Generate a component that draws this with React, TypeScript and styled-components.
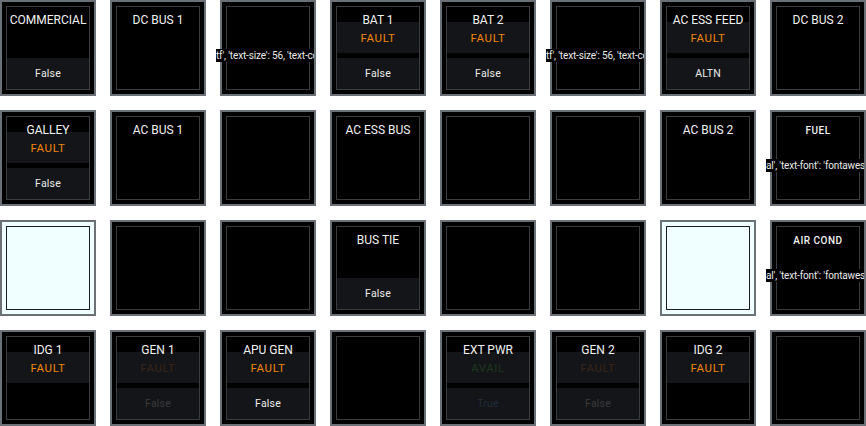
import React from "react";
import styled, { createGlobalStyle } from "styled-components";

const GlobalStyle = createGlobalStyle`
  html, body {
    margin: 0;
    padding: 0;
    background: #ffffff;
  }
  body {
    font-family: Roboto, "Liberation Sans", sans-serif;
  }
`;

type Tone = "fault" | "faultDim" | "availDim" | "normal" | "dim" | "trueDim";

type Line = { text: string; tone: Tone };

type Cell = {
  title?: string;
  small?: boolean;
  mid?: Line;
  bottom?: Line;
  overlay?: string;
  light?: boolean;
};

const toneColor: Record<Tone, string> = {
  fault: "#f0850c",
  faultDim: "#3a2519",
  availDim: "#1d381e",
  normal: "#ececec",
  dim: "#3a3b3d",
  trueDim: "#1e2d3c",
};

const SIZE_OVERLAY = "tf', 'text-size': 56, 'text-color': 'white'";
const FONT_OVERLAY = "al', 'text-font': 'fontawesome.ttf'";

const cells: Cell[] = [
  // row 1
  { title: "COMMERCIAL", bottom: { text: "False", tone: "normal" } },
  { title: "DC BUS 1" },
  { overlay: SIZE_OVERLAY },
  {
    title: "BAT 1",
    mid: { text: "FAULT", tone: "fault" },
    bottom: { text: "False", tone: "normal" },
  },
  {
    title: "BAT 2",
    mid: { text: "FAULT", tone: "fault" },
    bottom: { text: "False", tone: "normal" },
  },
  { overlay: SIZE_OVERLAY },
  {
    title: "AC ESS FEED",
    mid: { text: "FAULT", tone: "fault" },
    bottom: { text: "ALTN", tone: "normal" },
  },
  { title: "DC BUS 2" },
  // row 2
  {
    title: "GALLEY",
    mid: { text: "FAULT", tone: "fault" },
    bottom: { text: "False", tone: "normal" },
  },
  { title: "AC BUS 1" },
  {},
  { title: "AC ESS BUS" },
  {},
  {},
  { title: "AC BUS 2" },
  { title: "FUEL", small: true, overlay: FONT_OVERLAY },
  // row 3
  { light: true },
  {},
  {},
  { title: "BUS TIE", bottom: { text: "False", tone: "normal" } },
  {},
  {},
  { light: true },
  { title: "AIR COND", small: true, overlay: FONT_OVERLAY },
  // row 4
  { title: "IDG 1", mid: { text: "FAULT", tone: "fault" } },
  {
    title: "GEN 1",
    mid: { text: "FAULT", tone: "faultDim" },
    bottom: { text: "False", tone: "dim" },
  },
  {
    title: "APU GEN",
    mid: { text: "FAULT", tone: "fault" },
    bottom: { text: "False", tone: "normal" },
  },
  {},
  {
    title: "EXT PWR",
    mid: { text: "AVAIL", tone: "availDim" },
    bottom: { text: "True", tone: "trueDim" },
  },
  {
    title: "GEN 2",
    mid: { text: "FAULT", tone: "faultDim" },
    bottom: { text: "False", tone: "dim" },
  },
  { title: "IDG 2", mid: { text: "FAULT", tone: "fault" } },
  {},
];

const App = () => {
  return (
    <>
      <GlobalStyle />
      <Panel>
        {cells.map((cell, i) => (
          <Button key={i} $light={cell.light}>
            <Inner $light={cell.light}>
              {cell.title && <Title $small={cell.small}>{cell.title}</Title>}
              {cell.mid && (
                <MidBand>
                  <Value $tone={cell.mid.tone} $wide>
                    {cell.mid.text}
                  </Value>
                </MidBand>
              )}
              {cell.bottom && (
                <BottomBand>
                  <Value $tone={cell.bottom.tone}>{cell.bottom.text}</Value>
                </BottomBand>
              )}
            </Inner>
            {cell.overlay && <Overlay>{cell.overlay}</Overlay>}
          </Button>
        ))}
      </Panel>
    </>
  );
};

const Panel = styled.div`
  display: grid;
  grid-template-columns: repeat(8, 96px);
  grid-auto-rows: 96px;
  gap: 14px;
  width: 866px;
`;

const Button = styled.div<{ $light?: boolean }>`
  position: relative;
  box-sizing: border-box;
  width: 96px;
  height: 96px;
  border: 2px solid #6b7176;
  padding: 4px;
  background-color: ${(p) => (p.$light ? "#f0ffff" : "#000000")};
`;

const Inner = styled.div<{ $light?: boolean }>`
  box-sizing: border-box;
  height: 100%;
  border: 1px solid ${(p) => (p.$light ? "#1b1e20" : "#3a3d40")};
  display: grid;
  grid-template-columns: 1fr;
  grid-template-rows: 15px 31px 5px 31px;
`;

const Title = styled.div<{ $small?: boolean }>`
  grid-row: 1 / 3;
  grid-column: 1;
  z-index: 1;
  align-self: start;
  padding-top: ${(p) => (p.$small ? "7px" : "6px")};
  text-align: center;
  white-space: nowrap;
  line-height: 14px;
  font-size: ${(p) => (p.$small ? "10px" : "12px")};
  font-weight: ${(p) => (p.$small ? 500 : 400)};
  letter-spacing: ${(p) => (p.$small ? "0.5px" : "0")};
  color: #f2f2f2;
`;

const Band = styled.div`
  grid-column: 1;
  display: flex;
  align-items: center;
  justify-content: center;
  background-color: #141518;
`;

const MidBand = styled(Band)`
  grid-row: 2;
`;

const BottomBand = styled(Band)`
  grid-row: 4;
`;

const Value = styled.span<{ $tone: Tone; $wide?: boolean }>`
  font-size: ${(p) => (p.$wide ? "11.5px" : "10.5px")};
  letter-spacing: ${(p) => (p.$wide ? "0.6px" : "0.2px")};
  line-height: 14px;
  color: ${(p) => toneColor[p.$tone]};
`;

const Overlay = styled.div`
  position: absolute;
  top: 47px;
  left: -6px;
  width: 98px;
  overflow: hidden;
  white-space: nowrap;
  background-color: #000000;
  font-size: 10px;
  letter-spacing: -0.15px;
  line-height: 13px;
  color: #eaeaea;
`;

export default App;
